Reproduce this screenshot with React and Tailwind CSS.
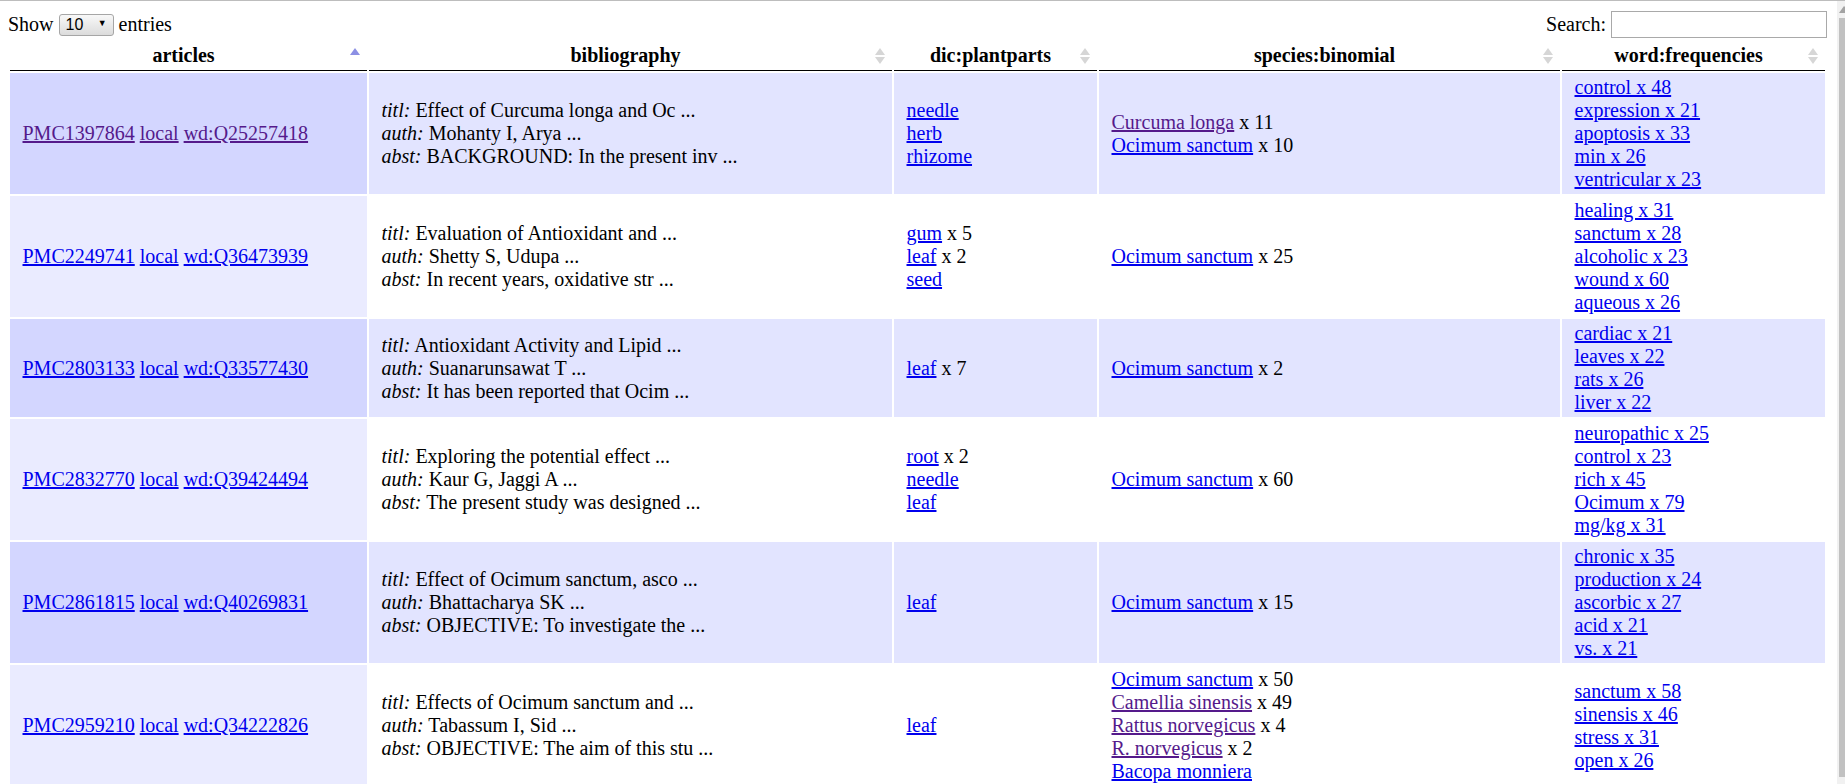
const rows = [
  {
    id: "PMC1397864",
    wd: "wd:Q25257418",
    visited: true,
    bib: ["Effect of Curcuma longa and Oc ...", "Mohanty I, Arya ...", "BACKGROUND: In the present inv ..."],
    parts: [["needle"], ["herb"], ["rhizome"]],
    species: [["Curcuma longa", "x 11", true], ["Ocimum sanctum", "x 10"]],
    words: ["control x 48", "expression x 21", "apoptosis x 33", "min x 26", "ventricular x 23"],
  },
  {
    id: "PMC2249741",
    wd: "wd:Q36473939",
    bib: ["Evaluation of Antioxidant and ...", "Shetty S, Udupa ...", "In recent years, oxidative str ..."],
    parts: [["gum", "x 5"], ["leaf", "x 2"], ["seed"]],
    species: [["Ocimum sanctum", "x 25"]],
    words: ["healing x 31", "sanctum x 28", "alcoholic x 23", "wound x 60", "aqueous x 26"],
  },
  {
    id: "PMC2803133",
    wd: "wd:Q33577430",
    bib: ["Antioxidant Activity and Lipid ...", "Suanarunsawat T ...", "It has been reported that Ocim ..."],
    parts: [["leaf", "x 7"]],
    species: [["Ocimum sanctum", "x 2"]],
    words: ["cardiac x 21", "leaves x 22", "rats x 26", "liver x 22"],
  },
  {
    id: "PMC2832770",
    wd: "wd:Q39424494",
    bib: ["Exploring the potential effect ...", "Kaur G, Jaggi A ...", "The present study was designed ..."],
    parts: [["root", "x 2"], ["needle"], ["leaf"]],
    species: [["Ocimum sanctum", "x 60"]],
    words: ["neuropathic x 25", "control x 23", "rich x 45", "Ocimum x 79", "mg/kg x 31"],
  },
  {
    id: "PMC2861815",
    wd: "wd:Q40269831",
    bib: ["Effect of Ocimum sanctum, asco ...", "Bhattacharya SK ...", "OBJECTIVE: To investigate the ..."],
    parts: [["leaf"]],
    species: [["Ocimum sanctum", "x 15"]],
    words: ["chronic x 35", "production x 24", "ascorbic x 27", "acid x 21", "vs. x 21"],
  },
  {
    id: "PMC2959210",
    wd: "wd:Q34222826",
    bib: ["Effects of Ocimum sanctum and ...", "Tabassum I, Sid ...", "OBJECTIVE: The aim of this stu ..."],
    parts: [["leaf"]],
    species: [
      ["Ocimum sanctum", "x 50"],
      ["Camellia sinensis", "x 49", true],
      ["Rattus norvegicus", "x 4", true],
      ["R. norvegicus", "x 2", true],
      ["Bacopa monniera"],
    ],
    words: ["sanctum x 58", "sinensis x 46", "stress x 31", "open x 26"],
  },
];

function A({ children, visited }) {
  return (
    <a href="#" className={`underline ${visited ? "text-[#551a8b]" : "text-[#0000ee]"}`}>
      {children}
    </a>
  );
}

function SortIcon({ active }) {
  return (
    <svg className="absolute right-[7px] top-1/2 -translate-y-1/2" width="10" height="18" viewBox="0 0 10 18">
      <path d="M0 8 L5 1 L10 8 Z" fill={active ? "#8c90e4" : "#d6d6d6"} />
      {!active && <path d="M0 10 L5 17 L10 10 Z" fill="#d6d6d6" />}
    </svg>
  );
}

const heads = ["articles", "bibliography", "dic:plantparts", "species:binomial", "word:frequencies"];

export default function App() {
  return (
    <div className="flex h-[784px] w-[1845px] overflow-hidden border-t border-[#bdbdbd] bg-white font-['Liberation_Serif',serif] text-[20px] leading-[23px] text-black">
      <div className="min-w-0 flex-1">
        <div className="flex h-[38px] items-start justify-between pl-[8px] pr-[10px]">
          <label className="mt-[11px] flex items-center">
            Show
            <span className="relative mx-[5px] inline-block">
              <select className="h-[22px] w-[55px] appearance-none rounded-[3px] border border-[#a6a6a6] bg-gradient-to-b from-[#f8f8f8] to-[#dcdcdc] pl-[6px] font-['Liberation_Sans',sans-serif] text-[16px] leading-[20px]">
                <option>10</option>
                <option>25</option>
                <option>50</option>
                <option>100</option>
              </select>
              <span className="pointer-events-none absolute right-[7px] top-[6px] text-[9px] leading-[10px]">▼</span>
            </span>
            entries
          </label>
          <label className="mt-[10px] flex items-center">
            Search:
            <input className="ml-[5px] h-[27px] w-[216px] border border-[#a9a9a9] bg-white px-[3px] text-[16px]" />
          </label>
        </div>
        <table className="ml-[8px] w-[1819px] table-fixed border-separate border-spacing-[2px]">
          <colgroup>
            <col className="w-[357px]" />
            <col className="w-[523px]" />
            <col className="w-[203px]" />
            <col className="w-[461px]" />
            <col className="w-[263px]" />
          </colgroup>
          <thead>
            <tr>
              {heads.map((h, i) => (
                <th
                  key={h}
                  className="relative border-b border-black pb-[3px] pl-[12.5px] pr-[22.5px] pt-[3px] text-center font-bold"
                >
                  {h}
                  <SortIcon active={i === 0} />
                </th>
              ))}
            </tr>
          </thead>
          <tbody>
            {rows.map((r, ri) => {
              const odd = ri % 2 === 0;
              const td = `px-[12.5px] py-[3px] text-left align-middle ${odd ? "bg-[#e2e4ff]" : "bg-white"}`;
              return (
                <tr key={r.id}>
                  <td className={`px-[12.5px] py-[3px] text-left align-middle ${odd ? "bg-[#d3d6ff]" : "bg-[#eaebff]"}`}>
                    <A visited={r.visited}>{r.id}</A> <A visited={r.visited}>local</A>{" "}
                    <A visited={r.visited}>{r.wd}</A>
                  </td>
                  <td className={td}>
                    <div>
                      <i>titl:</i> {r.bib[0]}
                    </div>
                    <div>
                      <i>auth:</i> {r.bib[1]}
                    </div>
                    <div>
                      <i>abst:</i> {r.bib[2]}
                    </div>
                  </td>
                  <td className={td}>
                    {r.parts.map(([p, n]) => (
                      <div key={p}>
                        <A>{p}</A>
                        {n && ` ${n}`}
                      </div>
                    ))}
                  </td>
                  <td className={td}>
                    {r.species.map(([s, n, v]) => (
                      <div key={s}>
                        <A visited={v}>{s}</A>
                        {n && ` ${n}`}
                      </div>
                    ))}
                  </td>
                  <td className={td}>
                    {r.words.map((w) => (
                      <div key={w}>
                        <A>{w}</A>
                      </div>
                    ))}
                  </td>
                </tr>
              );
            })}
          </tbody>
        </table>
      </div>
      <div className="flex w-[8px] flex-col bg-[#f1f1f1] pl-[2px]">
        <svg width="6" height="17" viewBox="0 0 6 17" className="shrink-0">
          <path d="M0 12 L5 5 L6 6 L6 12 Z" fill="#a3a3a3" />
        </svg>
        <div className="flex-1 bg-[#c1c1c1]" />
        <div className="h-[7px] shrink-0" />
      </div>
    </div>
  );
}
